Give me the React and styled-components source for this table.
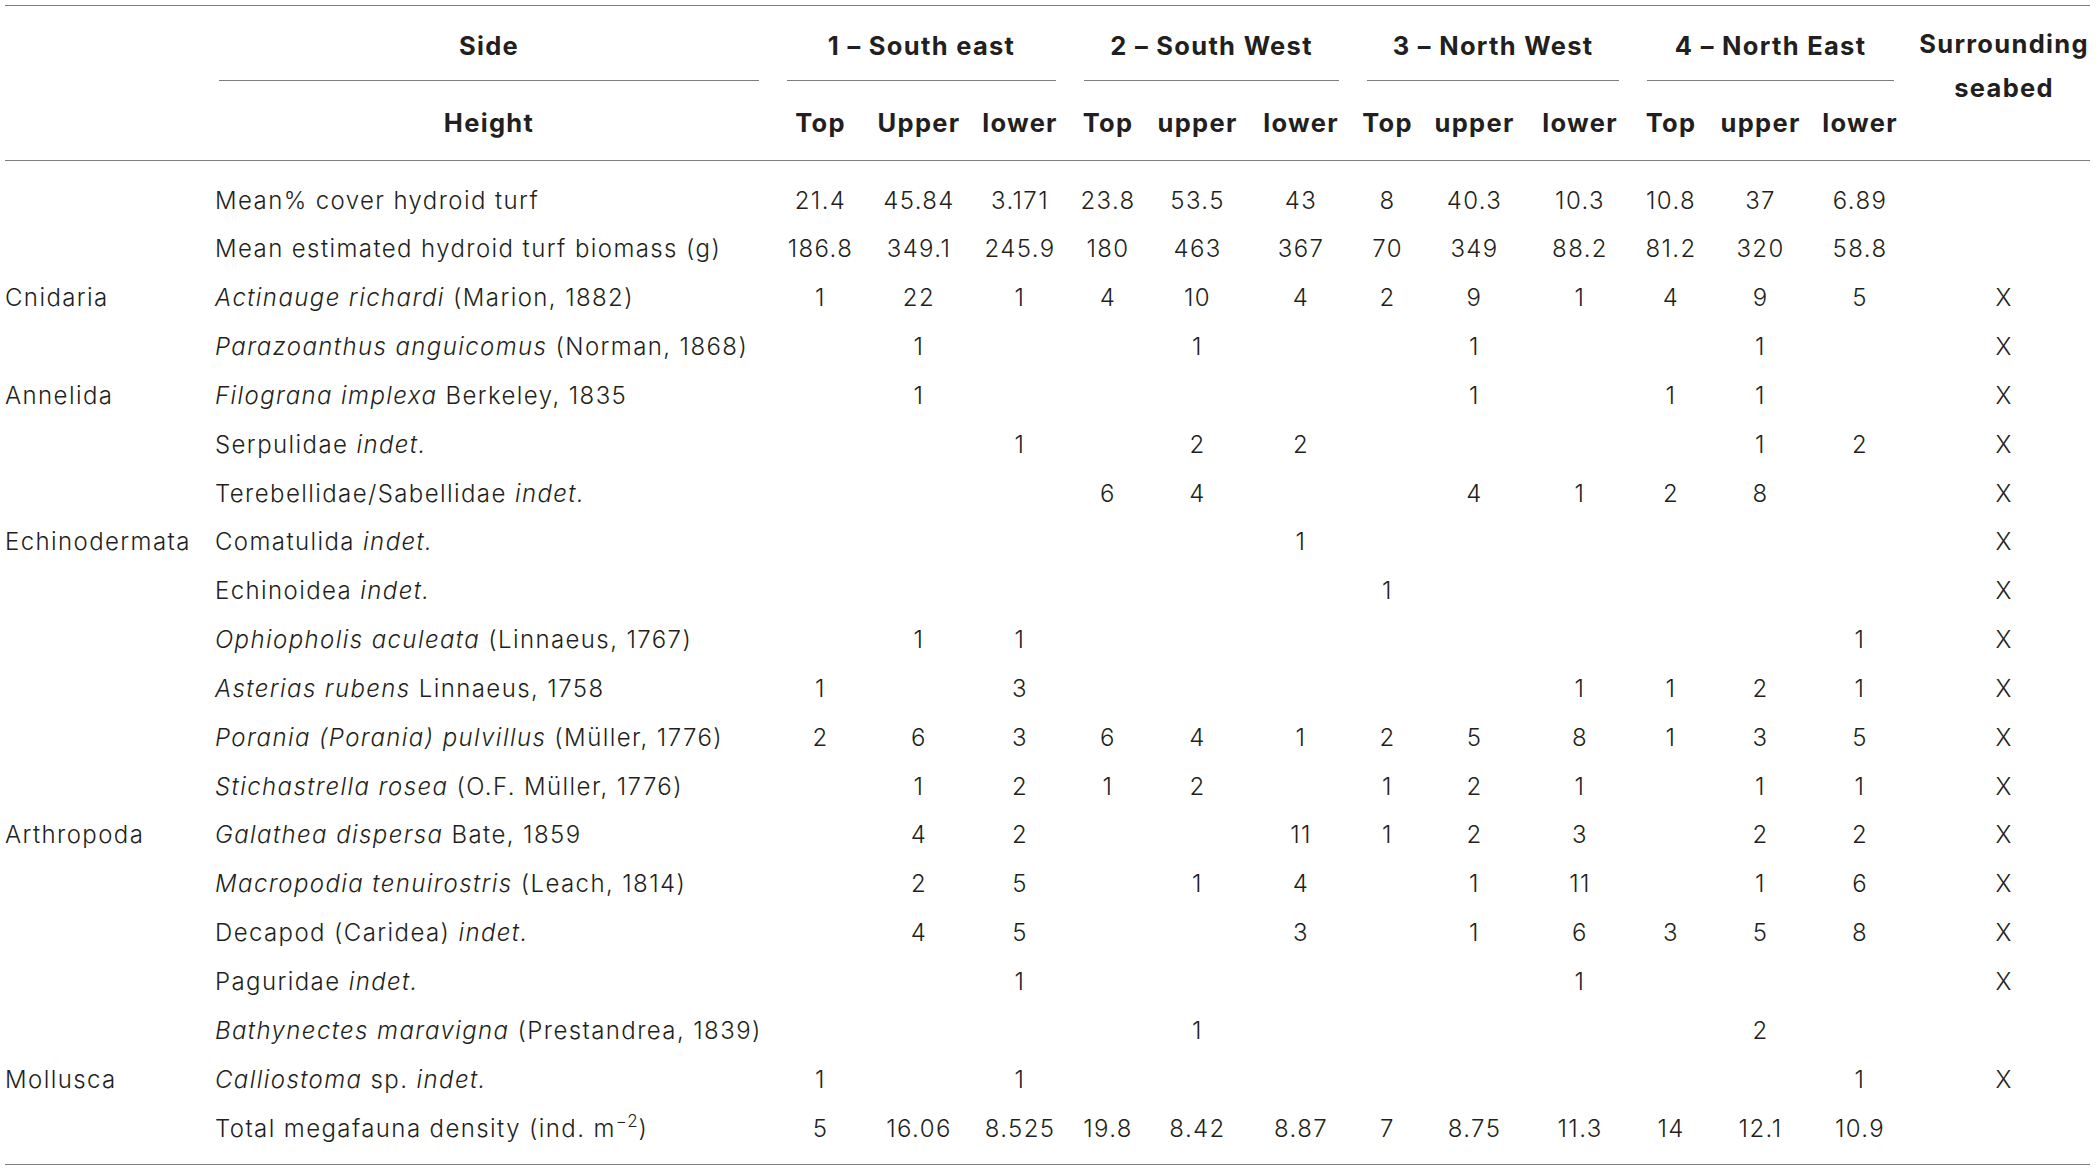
import React from 'react';
import styled, { createGlobalStyle } from 'styled-components';

const GlobalStyle = createGlobalStyle`
  html, body {
    margin: 0;
    padding: 0;
    background: #fff;
  }
  body {
    font-family: Inter, "Liberation Sans", Arial, sans-serif;
    color: #231f20;
  }
`;

const LINE = '1.5px solid #7d7d7d';

const Page = styled.div`
  padding: 5px 0 0 5px;
  background: #fff;
  min-height: 1166px;
  box-sizing: border-box;
`;

const Table = styled.table`
  width: 2085px;
  table-layout: fixed;
  border-collapse: collapse;
  border-spacing: 0;
  border-top: ${LINE};
  border-bottom: ${LINE};
  font-size: 24px;
  font-weight: 300;
  letter-spacing: 1.4px;
  color: #231f20;
`;

const Col = styled.col`
  width: ${(p) => p.$w}px;
`;

const HeadRow = styled.tr`
  height: ${(p) => p.$h}px;
`;

const HeadCell = styled.th`
  padding: 0;
  font-size: 25.5px;
  font-weight: 700;
  letter-spacing: 1.3px;
  text-align: center;
  vertical-align: bottom;
  white-space: nowrap;
`;

const BlankHead = styled.th`
  padding: 0;
  border-bottom: ${LINE};
`;

const GroupLabel = styled.div`
  margin: 0 14px;
  height: 75px;
  box-sizing: border-box;
  padding-top: 5px;
  border-bottom: ${LINE};
  display: flex;
  align-items: center;
  justify-content: center;
`;

const SubHead = styled.th`
  padding: 5px 0 0;
  font-size: 25.5px;
  font-weight: 700;
  letter-spacing: 1.3px;
  text-align: center;
  vertical-align: middle;
  white-space: nowrap;
  border-bottom: ${LINE};
`;

const SeabedHead = styled.th`
  padding: 16px 0 0 10px;
  font-size: 25.5px;
  font-weight: 700;
  letter-spacing: 1.3px;
  line-height: 44px;
  text-align: center;
  vertical-align: top;
  white-space: nowrap;
  border-bottom: ${LINE};
`;

const SpacerRow = styled.tr`
  height: ${(p) => p.$h}px;

  td {
    padding: 0;
  }
`;

const Cell = styled.td`
  height: 48.85px;
  padding: 0;
  vertical-align: middle;
  white-space: nowrap;
`;

const PhylumCell = styled(Cell)`
  text-align: left;
`;

const SpeciesCell = styled(Cell)`
  text-align: left;
  padding-left: 10px;
`;

const NumCell = styled(Cell)`
  text-align: center;
`;

const SeabedCell = styled(Cell)`
  text-align: center;
  padding-left: 10px;
`;

const Em = styled.i`
  font-style: italic;
`;

const Sup = styled.sup`
  font-size: 17px;
  line-height: 0;
  vertical-align: 10px;
  letter-spacing: 0.8px;
`;

const colWidths = [200, 568, 95, 102, 100, 76, 103, 104, 69, 105, 106, 76, 103, 96, 182];

const groups = ['1 – South east', '2 – South West', '3 – North West', '4 – North East'];
const heights = ['Top', 'Upper', 'lower', 'Top', 'upper', 'lower', 'Top', 'upper', 'lower', 'Top', 'upper', 'lower'];

const rows = [
  ['', <>Mean% cover hydroid turf</>, [21.4, 45.84, 3.171, 23.8, 53.5, 43, 8, 40.3, 10.3, 10.8, 37, 6.89], ''],
  ['', <>Mean estimated hydroid turf biomass (g)</>, [186.8, 349.1, 245.9, 180, 463, 367, 70, 349, 88.2, 81.2, 320, 58.8], ''],
  ['Cnidaria', <><Em>Actinauge richardi</Em> (Marion, 1882)</>, [1, 22, 1, 4, 10, 4, 2, 9, 1, 4, 9, 5], 'X'],
  ['', <><Em>Parazoanthus anguicomus</Em> (Norman, 1868)</>, ['', 1, '', '', 1, '', '', 1, '', '', 1, ''], 'X'],
  ['Annelida', <><Em>Filograna implexa</Em> Berkeley, 1835</>, ['', 1, '', '', '', '', '', 1, '', 1, 1, ''], 'X'],
  ['', <>Serpulidae <Em>indet.</Em></>, ['', '', 1, '', 2, 2, '', '', '', '', 1, 2], 'X'],
  ['', <>Terebellidae/Sabellidae <Em>indet.</Em></>, ['', '', '', 6, 4, '', '', 4, 1, 2, 8, ''], 'X'],
  ['Echinodermata', <>Comatulida <Em>indet.</Em></>, ['', '', '', '', '', 1, '', '', '', '', '', ''], 'X'],
  ['', <>Echinoidea <Em>indet.</Em></>, ['', '', '', '', '', '', 1, '', '', '', '', ''], 'X'],
  ['', <><Em>Ophiopholis aculeata</Em> (Linnaeus, 1767)</>, ['', 1, 1, '', '', '', '', '', '', '', '', 1], 'X'],
  ['', <><Em>Asterias rubens</Em> Linnaeus, 1758</>, [1, '', 3, '', '', '', '', '', 1, 1, 2, 1], 'X'],
  ['', <><Em>Porania (Porania) pulvillus</Em> (Müller, 1776)</>, [2, 6, 3, 6, 4, 1, 2, 5, 8, 1, 3, 5], 'X'],
  ['', <><Em>Stichastrella rosea</Em> (O.F. Müller, 1776)</>, ['', 1, 2, 1, 2, '', 1, 2, 1, '', 1, 1], 'X'],
  ['Arthropoda', <><Em>Galathea dispersa</Em> Bate, 1859</>, ['', 4, 2, '', '', 11, 1, 2, 3, '', 2, 2], 'X'],
  ['', <><Em>Macropodia tenuirostris</Em> (Leach, 1814)</>, ['', 2, 5, '', 1, 4, '', 1, 11, '', 1, 6], 'X'],
  ['', <>Decapod (Caridea) <Em>indet.</Em></>, ['', 4, 5, '', '', 3, '', 1, 6, 3, 5, 8], 'X'],
  ['', <>Paguridae <Em>indet.</Em></>, ['', '', 1, '', '', '', '', '', 1, '', '', ''], 'X'],
  ['', <><Em>Bathynectes maravigna</Em> (Prestandrea, 1839)</>, ['', '', '', '', 1, '', '', '', '', '', 2, ''], ''],
  ['Mollusca', <><Em>Calliostoma</Em> sp. <Em>indet.</Em></>, [1, '', 1, '', '', '', '', '', '', '', '', 1], 'X'],
  ['', <>Total megafauna density (ind. m<Sup>−2</Sup>)</>, [5, 16.06, 8.525, 19.8, 8.42, 8.87, 7, 8.75, 11.3, 14, 12.1, 10.9], ''],
];

function App() {
  return (
    <Page>
      <GlobalStyle />
      <Table>
        <colgroup>
          {colWidths.map((w, i) => (
            <Col key={i} $w={w} />
          ))}
        </colgroup>
        <thead>
          <HeadRow $h={75}>
            <BlankHead rowSpan={2} />
            <HeadCell>
              <GroupLabel>Side</GroupLabel>
            </HeadCell>
            {groups.map((g) => (
              <HeadCell key={g} colSpan={3}>
                <GroupLabel>{g}</GroupLabel>
              </HeadCell>
            ))}
            <SeabedHead rowSpan={2}>
              Surrounding
              <br />
              seabed
            </SeabedHead>
          </HeadRow>
          <HeadRow $h={79}>
            <SubHead>Height</SubHead>
            {heights.map((h, i) => (
              <SubHead key={i}>{h}</SubHead>
            ))}
          </HeadRow>
        </thead>
        <tbody>
          <SpacerRow $h={15.6}>
            <td colSpan={15} />
          </SpacerRow>
          {rows.map(([phylum, species, values, seabed], i) => (
            <tr key={i}>
              <PhylumCell>{phylum}</PhylumCell>
              <SpeciesCell>{species}</SpeciesCell>
              {values.map((v, j) => (
                <NumCell key={j}>{v}</NumCell>
              ))}
              <SeabedCell>{seabed}</SeabedCell>
            </tr>
          ))}
          <SpacerRow $h={12.5}>
            <td colSpan={15} />
          </SpacerRow>
        </tbody>
      </Table>
    </Page>
  );
}

export default App;
